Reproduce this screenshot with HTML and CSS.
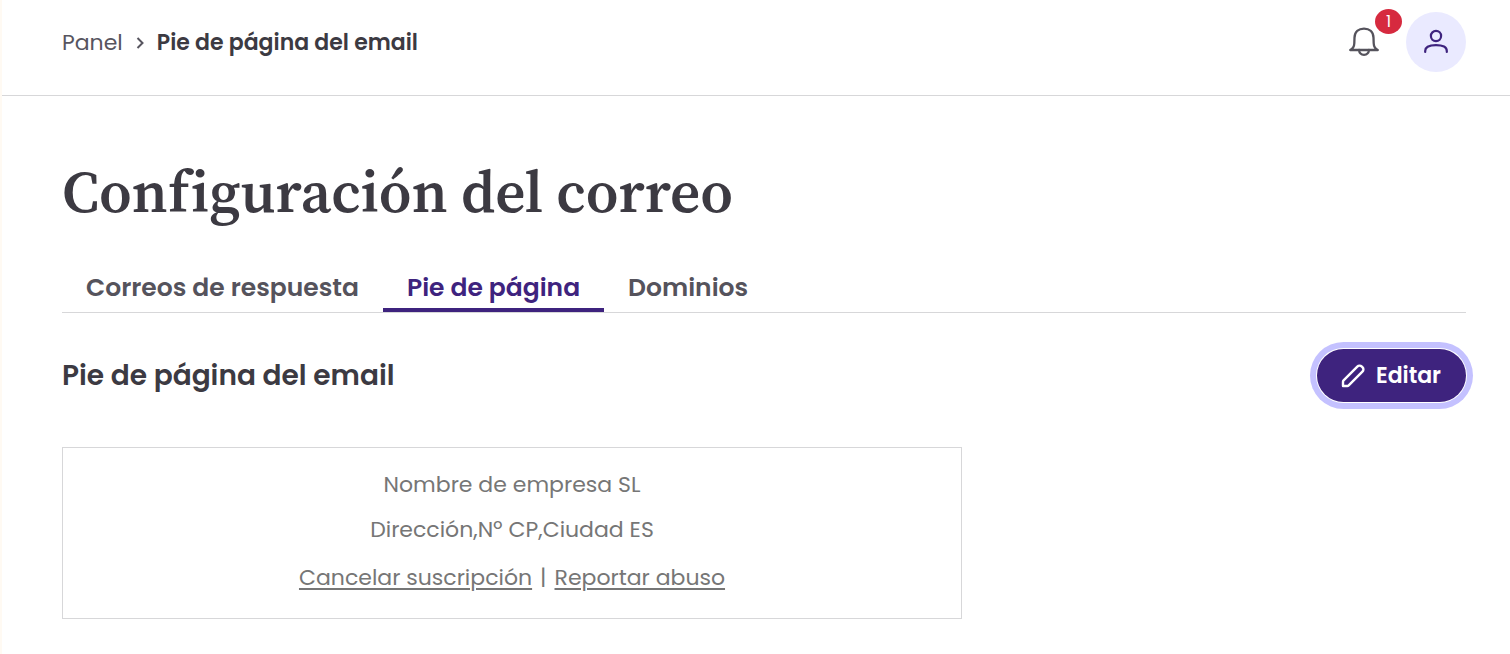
FILE: index.html
```html
<!DOCTYPE html>
<html lang="es">
<head>
    <meta charset="UTF-8">
    <meta name="viewport" content="width=device-width, initial-scale=1.0">
    <title>Configuración del correo</title>
    <link rel="stylesheet" href="styles.css">
</head>
<body>
    <header class="topbar">
        <nav class="breadcrumb" aria-label="Ruta">
            <a href="#">Panel</a>
            <svg width="8" height="12" viewBox="0 0 8 12" fill="none" stroke="currentColor" stroke-width="2"><path d="M1.5 1 6.5 6l-5 5"/></svg>
            <span class="current">Pie de página del email</span>
        </nav>
        <div class="actions">
            <button class="bell" aria-label="Notificaciones">
                <svg width="32" height="32" viewBox="0 0 32 32" fill="none" stroke="currentColor" stroke-width="2.300" stroke-linejoin="round" stroke-linecap="round">
                    <path d="M2.200 24c2.400-1.200 4-3.200 4.100-6.800l.2-5.600C6.700 5.800 10.600 2.600 16 2.600s9.300 3.200 9.500 9l.2 5.600c.1 3.600 1.700 5.600 4.100 6.800z"/>
                    <path d="M11 24c.3 2.800 2.200 4.800 5 4.800s4.700-2 5-4.800"/>
                </svg>
                <span class="badge">1</span>
            </button>
            <button class="avatar" aria-label="Mi cuenta">
                <svg width="26" height="26" viewBox="0 0 26 26" fill="none" stroke="currentColor" stroke-width="2.200" stroke-linecap="round">
                    <circle cx="13" cy="7" r="5.100"/>
                    <path d="M2.200 23v-1c0-4 3.800-5.800 10.800-5.800s10.800 1.800 10.800 5.800v1"/>
                </svg>
            </button>
        </div>
    </header>

    <main class="content">
        <h1>Configuración del correo</h1>

        <nav class="tabs" aria-label="Secciones">
            <a href="#">Correos de respuesta</a>
            <a href="#" class="active" aria-current="page">Pie de página</a>
            <a href="#">Dominios</a>
        </nav>

        <div class="section-head">
            <h2>Pie de página del email</h2>
            <button class="edit">
                <svg width="24" height="24" viewBox="0 0 24 24" fill="none" stroke="currentColor" stroke-width="2.400" stroke-linejoin="round">
                    <path d="M2 22v-4.300c0-.6.2-1 .6-1.400L16.300 2.600c1.300-1.300 3.200-1.300 4.300-.2l1 1c1.100 1.100 1.100 3-.2 4.300L7.700 21.400c-.4.4-.8.6-1.400.6z"/>
                </svg>
                Editar
            </button>
        </div>

        <!-- Vista previa del pie -->
        <section class="preview">
            <p>Nombre de empresa SL</p>
            <p>Dirección,Nº CP,Ciudad ES</p>
            <p class="links"><a href="#">Cancelar suscripción</a><span class="bar">|</span><a href="#">Reportar abuso</a></p>
        </section>
    </main>
</body>
</html>
```

FILE: styles.css
```css
* {
    box-sizing: border-box;
}

body {
    margin: 0;
    min-height: 100vh;
    border-left: 2px solid #fffaf3;
    background-color: #fff;
    color: #3c3a42;
    font-family: Poppins, Inter, sans-serif;
    font-size: 22px;
    line-height: 32px;
}

a {
    color: inherit;
    text-decoration: none;
}

button {
    border: none;
    padding: 0;
    font: inherit;
    cursor: pointer;
}

svg {
    display: block;
}

.topbar {
    display: flex;
    justify-content: space-between;
    align-items: center;
    padding: 12px 44px 23px 60px;
    border-bottom: 1px solid #d7d7d9;
}

.breadcrumb {
    display: flex;
    align-items: center;
    gap: 13px;
    padding-top: 2px;
    color: #57555f;
}

.breadcrumb .current {
    color: #3c3a42;
    font-weight: 600;
}

.actions {
    display: flex;
    align-items: center;
    gap: 26px;
}

.bell {
    position: relative;
    background: none;
    color: #55535c;
}

.badge {
    position: absolute;
    top: -17px;
    right: -22px;
    width: 27px;
    height: 25px;
    border-radius: 50%;
    background-color: #d62a3f;
    color: #fff;
    font-size: 16px;
    line-height: 25px;
    text-align: center;
}

.avatar {
    display: flex;
    justify-content: center;
    align-items: center;
    width: 60px;
    height: 60px;
    border-radius: 50%;
    background-color: #eaeaff;
    color: #3e237e;
}

.content {
    padding: 56px 44px 35px 60px;
}

h1 {
    margin: 0;
    font-family: "Source Serif Pro", "Source Serif 4", "Source Serif", "Liberation Serif", serif;
    font-size: 59px;
    font-weight: 600;
    line-height: 80px;
    font-variant-ligatures: none;
}

.tabs {
    display: flex;
    margin-top: 32px;
    border-bottom: 1px solid #d7d7d9;
    color: #55535c;
    font-size: 25px;
    font-weight: 600;
}

.tabs a {
    padding: 6px 24px 2px;
    border-bottom: 4px solid transparent;
    line-height: 36px;
}

.tabs a.active {
    border-color: #3e237e;
    color: #3e237e;
}

.section-head {
    display: flex;
    justify-content: space-between;
    align-items: center;
    margin-top: 36px;
}

h2 {
    margin: 0;
    font-size: 28px;
    font-weight: 600;
    line-height: 40px;
}

.edit {
    display: flex;
    align-items: center;
    gap: 11px;
    height: 53px;
    padding: 0 25px 0 24px;
    border-radius: 27px;
    background-color: #3e237e;
    box-shadow: 0 0 0 1px #fff, 0 0 0 7px #c4c1ff;
    color: #fff;
    font-weight: 600;
}

.preview {
    max-width: 900px;
    margin-top: 45px;
    padding: 21px 24px 24px;
    border: 1px solid #d7d7d9;
    color: #767676;
    text-align: center;
}

.preview p {
    margin: 0 0 13px;
}

.preview .links {
    margin: 16px 0 0;
}

.preview .links a {
    text-decoration: underline;
    text-decoration-thickness: 2px;
    text-underline-offset: 3px;
}

.preview .bar {
    margin: 0 8px;
}
```
